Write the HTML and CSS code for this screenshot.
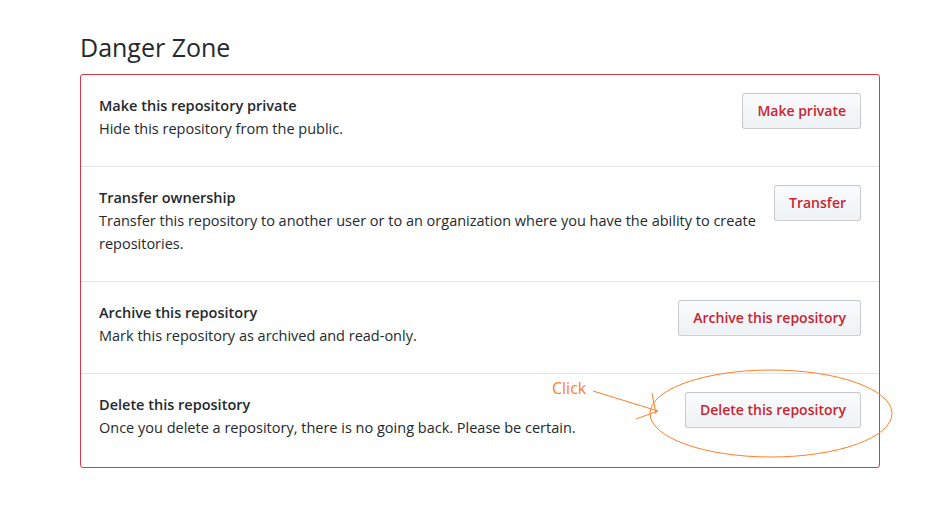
FILE: index.html
```html
<!DOCTYPE html>
<html lang="en">
<head>
<meta charset="utf-8">
<title>Danger Zone</title>
<link rel="stylesheet" href="styles.css">
</head>
<body>
<div class="page">
  <h2 class="heading">Danger Zone</h2>
  <ul class="box">
    <li class="row">
      <div class="info">
        <strong class="title">Make this repository private</strong>
        <p class="desc">Hide this repository from the public.</p>
      </div>
      <button class="btn">Make private</button>
    </li>
    <li class="row">
      <div class="info">
        <strong class="title">Transfer ownership</strong>
        <p class="desc">Transfer this repository to another user or to an organization where you have the ability to create repositories.</p>
      </div>
      <button class="btn">Transfer</button>
    </li>
    <li class="row">
      <div class="info">
        <strong class="title">Archive this repository</strong>
        <p class="desc">Mark this repository as archived and read-only.</p>
      </div>
      <button class="btn">Archive this repository</button>
    </li>
    <li class="row">
      <div class="info">
        <strong class="title">Delete this repository</strong>
        <p class="desc">Once you delete a repository, there is no going back. Please be certain.</p>
      </div>
      <button class="btn">Delete this repository</button>
    </li>
  </ul>
  <svg class="annot" width="932" height="511" viewBox="0 0 932 511">
    <text x="552" y="394" class="annot-text">Click</text>
    <path d="M593 391 L658 411 M652 393 L656 414 M636 419 L658 411" class="annot-line"/>
    <ellipse cx="771" cy="413.5" rx="121" ry="43.5" class="annot-line"/>
  </svg>
</div>
</body>
</html>
```

FILE: styles.css
```css
* { box-sizing: border-box; }
html, body { margin: 0; padding: 0; background: #fff; }
body {
  font-family: "Open Sans", "Noto Sans", sans-serif;
  color: #24292e;
  font-size: 14.5px;
}
.page {
  position: relative;
  width: 932px;
  height: 511px;
  padding: 32px 52px 0 80px;
}
.heading {
  margin: 0 0 12px;
  font-size: 25px;
  font-weight: 400;
  line-height: 30px;
  color: #24292e;
}
.box {
  list-style: none;
  margin: 0;
  padding: 0;
  width: 800px;
  border: 1px solid #d73a49;
  border-radius: 3px;
}
.row {
  display: flex;
  align-items: flex-start;
  gap: 10px;
  padding: 18px 18px 26px;
  border-top: 1px solid #e1e4e8;
}
.row:first-child { border-top: 0; }
.row:last-child { padding-bottom: 28px; }
.info { flex: 1; padding-top: 2px; }
.title {
  display: block;
  font-weight: 600;
  line-height: 22px;
}
.desc {
  margin: 0;
  line-height: 23px;
}
.btn {
  flex: none;
  font-family: "Open Sans", "Noto Sans", sans-serif;
  font-size: 14px;
  font-weight: 600;
  line-height: 20px;
  height: 36px;
  padding: 7px 14px;
  color: #cb2431;
  background: linear-gradient(#fafbfc, #eff3f6 90%);
  border: 1px solid rgba(27,31,35,0.2);
  border-radius: 3px;
}
.annot {
  position: absolute;
  left: 0;
  top: 0;
  pointer-events: none;
}
.annot-text {
  font-family: "Open Sans", "Noto Sans", sans-serif;
  font-size: 16px;
  fill: #ff7f27;
}
.annot-line {
  fill: none;
  stroke: #ff7f27;
  stroke-width: 1;
}
```
